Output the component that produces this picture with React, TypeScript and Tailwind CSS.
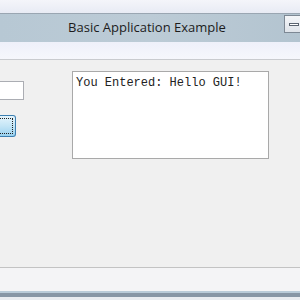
export default function App() {
  return (
    <div className="w-[300px] h-[300px] overflow-hidden flex flex-col bg-[#f0f0f0]">
      {/* window frame top */}
      <div className="h-[14px] bg-gradient-to-b from-[#f4f5fa] to-[#e8ebf4] border-b border-[#9aa6b2]" />
      <div className="h-[28px] flex items-center relative bg-gradient-to-r from-[#b7c8d4] via-[#bccbd6] to-[#b3c4d0]">
        <div className="flex-1 text-center text-[13px] text-[#1c1c1c] pr-[6px]" style={{ fontFamily: '"Segoe UI", "Open Sans", sans-serif' }}>
          Basic Application Example
        </div>
        <div className="absolute right-0 top-[1px] w-[16px] h-[18px] bg-gradient-to-b from-[#f4f6f9] to-[#dfe4ea] border border-[#7d8894] border-r-0 flex items-center pl-[4px]">
          <div className="w-[10px] h-[3px] bg-white border border-[#5a6470]" />
        </div>
      </div>
      <div className="h-[18px] bg-gradient-to-b from-[#eef0fa] to-[#f6f7fc] border-b border-[#c9cbcf]" />
      {/* client area */}
      <div className="flex-1 relative bg-[#f0f0f0]">
        <div className="flex">
          <div className="w-[72px] flex flex-col pt-[21px]">
            <div className="w-[24px] h-[19px] bg-white border border-[#abadb3] border-l-0" />
            <div className="mt-[15px] w-[16px] h-[22px] rounded-r-[3px] border border-[#3c7fb1] border-l-0 bg-gradient-to-b from-[#e5f4fc] via-[#c4e5f6] to-[#98d1ef] p-[2px] pl-0">
              <div className="w-full h-full border border-dotted border-[#222] border-l-0" />
            </div>
          </div>
          <div className="mt-[11px] w-[197px] h-[88px] bg-white border border-[#a9a9a9] pl-[3px] pt-[4px]">
            <div className="text-[12px] leading-[14px] text-[#222]" style={{ fontFamily: '"Courier New", "Liberation Mono", monospace' }}>
              You Entered: Hello GUI!
            </div>
          </div>
        </div>
      </div>
      <div className="h-[24px] bg-[#f4f4f6] border-t border-[#c3c3c3]" />
      <div className="h-[2px] bg-[#b9cbd9]" />
      <div className="h-[4px] bg-[#8796a6]" />
      <div className="h-[3px] bg-[#e9ecf1]" />
    </div>
  );
}
